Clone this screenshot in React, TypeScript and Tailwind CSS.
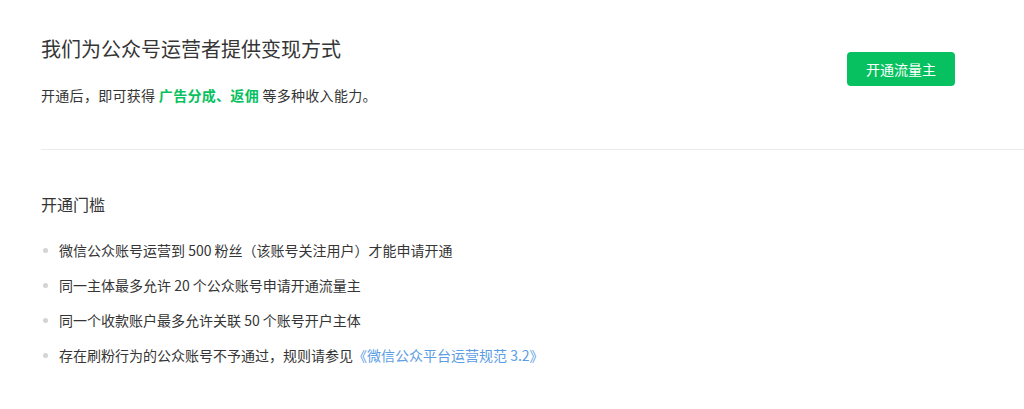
import React from 'react';

const FONT = '"Noto Sans CJK SC", "Liberation Sans", sans-serif';

const rules: React.ReactNode[] = [
  '微信公众账号运营到 500 粉丝（该账号关注用户）才能申请开通',
  '同一主体最多允许 20 个公众账号申请开通流量主',
  '同一个收款账户最多允许关联 50 个账号开户主体',
  <>
    存在刷粉行为的公众账号不予通过，规则请参见
    <a className="text-[#5c9de3]">《微信公众平台运营规范 3.2》</a>
  </>,
];

export default function App() {
  return (
    <div className="w-[1024px] h-[409px] bg-white pl-[41px] text-[#353535]" style={{ fontFamily: FONT }}>
      {/* Intro */}
      <div className="flex items-start justify-between border-b border-[#ececec] pt-[34px] pb-[43px] pr-[69px]">
        <div>
          <h2 className="text-[20px] leading-[30px]">我们为公众号运营者提供变现方式</h2>
          <p className="mt-[20px] text-[14px] leading-[22px] tracking-[0.3px]">
            开通后，即可获得 <span className="font-semibold text-[#07c160]">广告分成、返佣</span> 等多种收入能力。
          </p>
        </div>
        <button className="mt-[18px] h-[34px] w-[108px] rounded-[4px] bg-[#07c160] text-[14px] text-white">
          开通流量主
        </button>
      </div>

      {/* Requirements */}
      <div className="pt-[41px]">
        <h3 className="text-[16px] leading-[26px]">开通门槛</h3>
        <ul className="mt-[22px] flex flex-col gap-[13px]">
          {rules.map((r, i) => (
            <li key={i} className="flex items-center text-[14px] leading-[22px]">
              <span className="ml-[2px] mr-[11px] h-[5px] w-[5px] rounded-full bg-[#d4d4d4]" />
              <span>{r}</span>
            </li>
          ))}
        </ul>
      </div>
    </div>
  );
}
